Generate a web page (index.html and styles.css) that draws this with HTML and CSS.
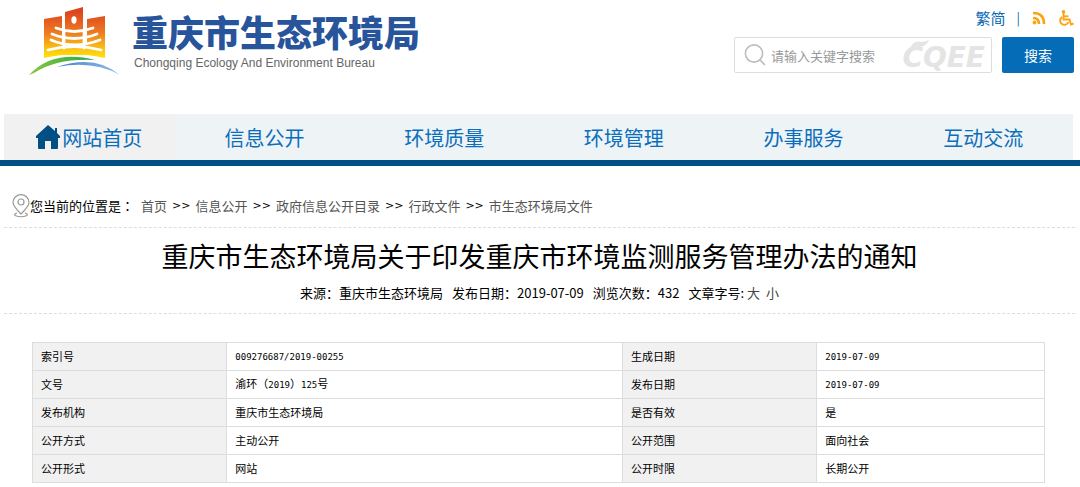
FILE: index.html
```html
<!DOCTYPE html>
<html lang="zh-CN">
<head>
<meta charset="utf-8">
<title>重庆市生态环境局</title>
<link rel="stylesheet" href="styles.css">
</head>
<body>
<header class="header">
  <a class="brand" href="#">
    <svg class="brand-mark" viewBox="0 0 92 70" aria-hidden="true">
      <defs>
        <linearGradient id="fire" gradientUnits="userSpaceOnUse" x1="0" y1="4" x2="0" y2="52">
          <stop offset="0" stop-color="#dc4420"/>
          <stop offset=".45" stop-color="#ee7a20"/>
          <stop offset=".8" stop-color="#fbc513"/>
          <stop offset="1" stop-color="#ffe800"/>
        </linearGradient>
        <linearGradient id="green" x1="0" y1="0" x2="1" y2="0">
          <stop offset="0" stop-color="#8cc63f"/>
          <stop offset="1" stop-color="#1fa84a"/>
        </linearGradient>
        <linearGradient id="blue" x1="0" y1="0" x2="1" y2="0">
          <stop offset="0" stop-color="#4a80cc"/>
          <stop offset="1" stop-color="#8fbde8"/>
        </linearGradient>
      </defs>
      <path fill="url(#fire)" d="M15 12 33 9V48Q24 49 15 51ZM36 5 54 0V47H36ZM58 12 76 9V51Q67 49 58 48Z"/>
      <path fill="url(#fire)" d="M32 38H59V48H32Z"/>
      <ellipse cx="45" cy="13" rx="2.600" ry="3.700" fill="#fff"/>
      <g fill="none" stroke="#fff" stroke-width="2.8" stroke-linecap="round">
        <path d="M27 21Q45 28 64 21"/>
        <path d="M23 27Q45 36 68 27"/>
        <path d="M22 33Q45 43 71 33"/>
        <path d="M19 43Q45 36 72 43"/>
        <path d="M35 24V41M55 24V41"/>
      </g>
      <path fill="url(#green)" d="M0 68Q24 42 66 53Q28 51 5 66Z"/>
      <path fill="url(#blue)" d="M28 60Q66 47 91 68Q64 53 28 60Z"/>
    </svg>
    <span class="brand-text">
      <span class="brand-name">重庆市生态环境局</span>
      <span class="brand-en">Chongqing Ecology And Environment Bureau</span>
    </span>
  </a>
  <div class="tools">
    <div class="quick">
      <a class="lang" href="#">繁简</a>
      <span class="bar">|</span>
      <a class="quick-icon" href="#" aria-label="RSS">
        <svg viewBox="0 0 16 16" width="16" height="16"><g fill="none" stroke="#fca311" stroke-width="2.6"><path d="M2 3Q13 3 13 14"/><path d="M2 8Q8 8 8 14"/></g><circle cx="3.5" cy="12.5" r="1.9" fill="#fca311"/></svg>
      </a>
      <a class="quick-icon" href="#" aria-label="无障碍">
        <svg viewBox="0 0 16 16" width="16" height="16"><circle cx="5.5" cy="1.8" r="1.8" fill="#fca311"/><g fill="none" stroke="#fca311" stroke-width="1.9"><path d="M5.500 3V9.500H11.500L13 14.500L15.500 13.500"/><path d="M5.500 6.300H10.500"/><path d="M4 7A4.300 4.300 0 1 0 10.500 12"/></g></svg>
      </a>
    </div>
    <form class="search">
      <label class="search-box">
        <svg class="lens" viewBox="0 0 22 24" aria-hidden="true"><g fill="none" stroke="#bdbdbd" stroke-width="1.6"><circle cx="10" cy="10.500" r="8.600"/><path d="M16 17L21 22"/></g></svg>
        <input class="search-input" type="text" placeholder="请输入关键字搜索" aria-label="请输入关键字搜索">
        <span class="watermark" aria-hidden="true">CQEE<svg class="leaf" viewBox="0 0 20 10"><path fill="#e4e4e4" d="M0 8Q4 0 11 2Q15 2 19 0Q16 7 9 7Q5 5 0 8Z"/></svg></span>
      </label>
      <button class="search-button" type="button">搜索</button>
    </form>
  </div>
</header>

<nav class="nav">
  <div class="nav-inner">
    <a class="nav-item nav-home" href="#"><svg class="home" viewBox="0 0 24 24" aria-hidden="true"><path fill="#004f85" d="M12 0 19 6V3H21V8L24 11V13H22V23Q22 24 21 24H15V16H9V24H3Q2 24 2 23V13H0V11Z"/></svg>网站首页</a>
    <a class="nav-item" href="#">信息公开</a>
    <a class="nav-item" href="#">环境质量</a>
    <a class="nav-item" href="#">环境管理</a>
    <a class="nav-item" href="#">办事服务</a>
    <a class="nav-item" href="#">互动交流</a>
  </div>
</nav>

<main class="main">
  <div class="crumbs">
    <span class="crumbs-label"><svg class="pin" viewBox="0 0 18 24" aria-hidden="true"><g fill="none" stroke="#999" stroke-width="1.2"><path d="M9 20Q1 12 1 8.500A8 7.800 0 0 1 17 8.500Q17 12 9 20Z"/><circle cx="9" cy="8" r="3"/><path d="M5 19Q2 20 3 21.500Q9 24 15 21.500Q16 20 13 19"/></g></svg>您当前的位置是<span class="colon">：</span></span>
    <a href="#">首页</a><span class="sep">&gt;&gt;</span><a href="#">信息公开</a><span class="sep">&gt;&gt;</span><a href="#">政府信息公开目录</a><span class="sep">&gt;&gt;</span><a href="#">行政文件</a><span class="sep">&gt;&gt;</span><a href="#">市生态环境局文件</a>
  </div>
  <div class="heading">
    <h1 class="title">重庆市生态环境局关于印发重庆市环境监测服务管理办法的通知</h1>
    <div class="meta">
      <span>来源<span class="colon">：</span>重庆市生态环境局</span>
      <span>发布日期<span class="colon">：</span>2019-07-09</span>
      <span>浏览次数<span class="colon">：</span>432</span>
      <span class="sizes">文章字号: <button class="size" type="button">大</button><button class="size" type="button">小</button></span>
    </div>
  </div>
  <table class="info">
    <colgroup><col class="c1"><col class="c2"><col class="c1"><col class="c3"></colgroup>
    <tr><th scope="row">索引号</th><td><span class="num">009276687/2019-00255</span></td><th scope="row">生成日期</th><td><span class="num">2019-07-09</span></td></tr>
    <tr><th scope="row">文号</th><td>渝环（<span class="num">2019</span>）<span class="num">125</span>号</td><th scope="row">发布日期</th><td><span class="num">2019-07-09</span></td></tr>
    <tr><th scope="row">发布机构</th><td>重庆市生态环境局</td><th scope="row">是否有效</th><td>是</td></tr>
    <tr><th scope="row">公开方式</th><td>主动公开</td><th scope="row">公开范围</th><td>面向社会</td></tr>
    <tr><th scope="row">公开形式</th><td>网站</td><th scope="row">公开时限</th><td>长期公开</td></tr>
  </table>
</main>
</body>
</html>
```
FILE: styles.css
```css
* { box-sizing: border-box; }
body {
  margin: 0;
  background: #fff;
  color: #000;
  font-family: "Noto Sans CJK SC", sans-serif;
  font-size: 13px;
}
a { color: inherit; text-decoration: none; }
svg { display: block; flex: none; }
button, input { font: inherit; }

.header {
  display: flex;
  justify-content: space-between;
  height: 114px;
  padding: 7px 6px 0 29px;
}
.brand { display: flex; gap: 11px; }
.brand-mark { width: 92px; height: 70px; }
.brand-text { display: flex; flex-direction: column; }
.brand-name {
  color: #27549b;
  font-size: 36px;
  font-weight: 900;
  line-height: 48px;
}
.brand-en {
  padding-left: 2px;
  color: #666;
  font-family: "Liberation Sans", Arial, sans-serif;
  font-size: 12px;
  line-height: 16px;
}

.tools { display: flex; flex-direction: column; gap: 9px; }
.quick {
  display: flex;
  justify-content: flex-end;
  align-items: center;
  gap: 11px;
  height: 21px;
  color: #0a6ab4;
  font-size: 15px;
}
.bar { font-size: 13px; }
.search { display: flex; gap: 10px; height: 36px; }
.search-box {
  display: flex;
  align-items: center;
  width: 258px;
  padding: 0 6px 0 9px;
  border: 1px solid #ddd;
  border-radius: 2px;
}
.lens { width: 22px; height: 24px; }
.search-input {
  flex: 1;
  min-width: 0;
  padding: 0 0 0 5px;
  border: 0;
  outline: 0;
  background: none;
  font-size: 13px;
}
.search-input::placeholder { color: #999; opacity: 1; }
.watermark {
  position: relative;
  padding-top: 6px;
  color: #e4e4e4;
  font: italic bold 28px/28px "DejaVu Sans", sans-serif;
}
.leaf { position: absolute; top: 2px; left: 8px; width: 20px; height: 10px; }
.search-button {
  width: 72px;
  border: 0;
  border-radius: 2px;
  background: #056db8;
  color: #fff;
  font-size: 14px;
}

.nav { padding: 0 7px 0 4px; border-bottom: 6px solid #004f85; }
.nav-inner {
  display: grid;
  grid-template-columns: 171fr repeat(5, 180fr);
  height: 46px;
  background: #eef3f6;
}
.nav-item {
  display: flex;
  align-items: center;
  justify-content: center;
  color: #0a6ebb;
  font-size: 20px;
}
.nav-home { background: #f1f1f1; }
.home { width: 24px; height: 24px; margin-right: 2px; }

.colon { font-family: "Noto Sans CJK TC", sans-serif; }

.main { padding: 0 5px 0 4px; }
.crumbs {
  display: flex;
  align-items: center;
  gap: 5px;
  height: 62px;
  padding: 18px 0 0 8px;
  border-bottom: 1px dashed #ddd;
}
.crumbs a { color: #555; }
.crumbs-label { display: flex; align-items: center; margin-right: 2px; }
.sep { font: 11px/16px "DejaVu Sans", sans-serif; }
.pin { width: 18px; height: 24px; }
.heading { padding: 7px 0 10px; border-bottom: 1px dashed #ddd; text-align: center; }
.title { margin: 0; font-size: 27px; font-weight: 400; line-height: 42px; }
.meta {
  display: flex;
  justify-content: center;
  gap: 9px;
  padding-top: 5px;
  font-size: 13px;
  line-height: 21px;
}
.size { margin: 0 6px 0 0; padding: 0; border: 0; background: none; color: #444; line-height: 20px; }
.size:last-child { margin: 0; }

.info {
  width: calc(100% - 58px);
  margin: 28px 0 0 28px;
  border-collapse: collapse;
  table-layout: fixed;
  font-size: 11px;
}
.c1 { width: 19.2%; }
.c2 { width: 39.1%; }
.info th, .info td {
  height: 28px;
  padding: 0 8px 2px;
  border: 1px solid #ddd;
  font-weight: 400;
  line-height: 16px;
  text-align: left;
}
.info th { background: #f1f1f1; }
.num { font-family: "DejaVu Sans Mono", monospace; font-size: 9px; }
```
